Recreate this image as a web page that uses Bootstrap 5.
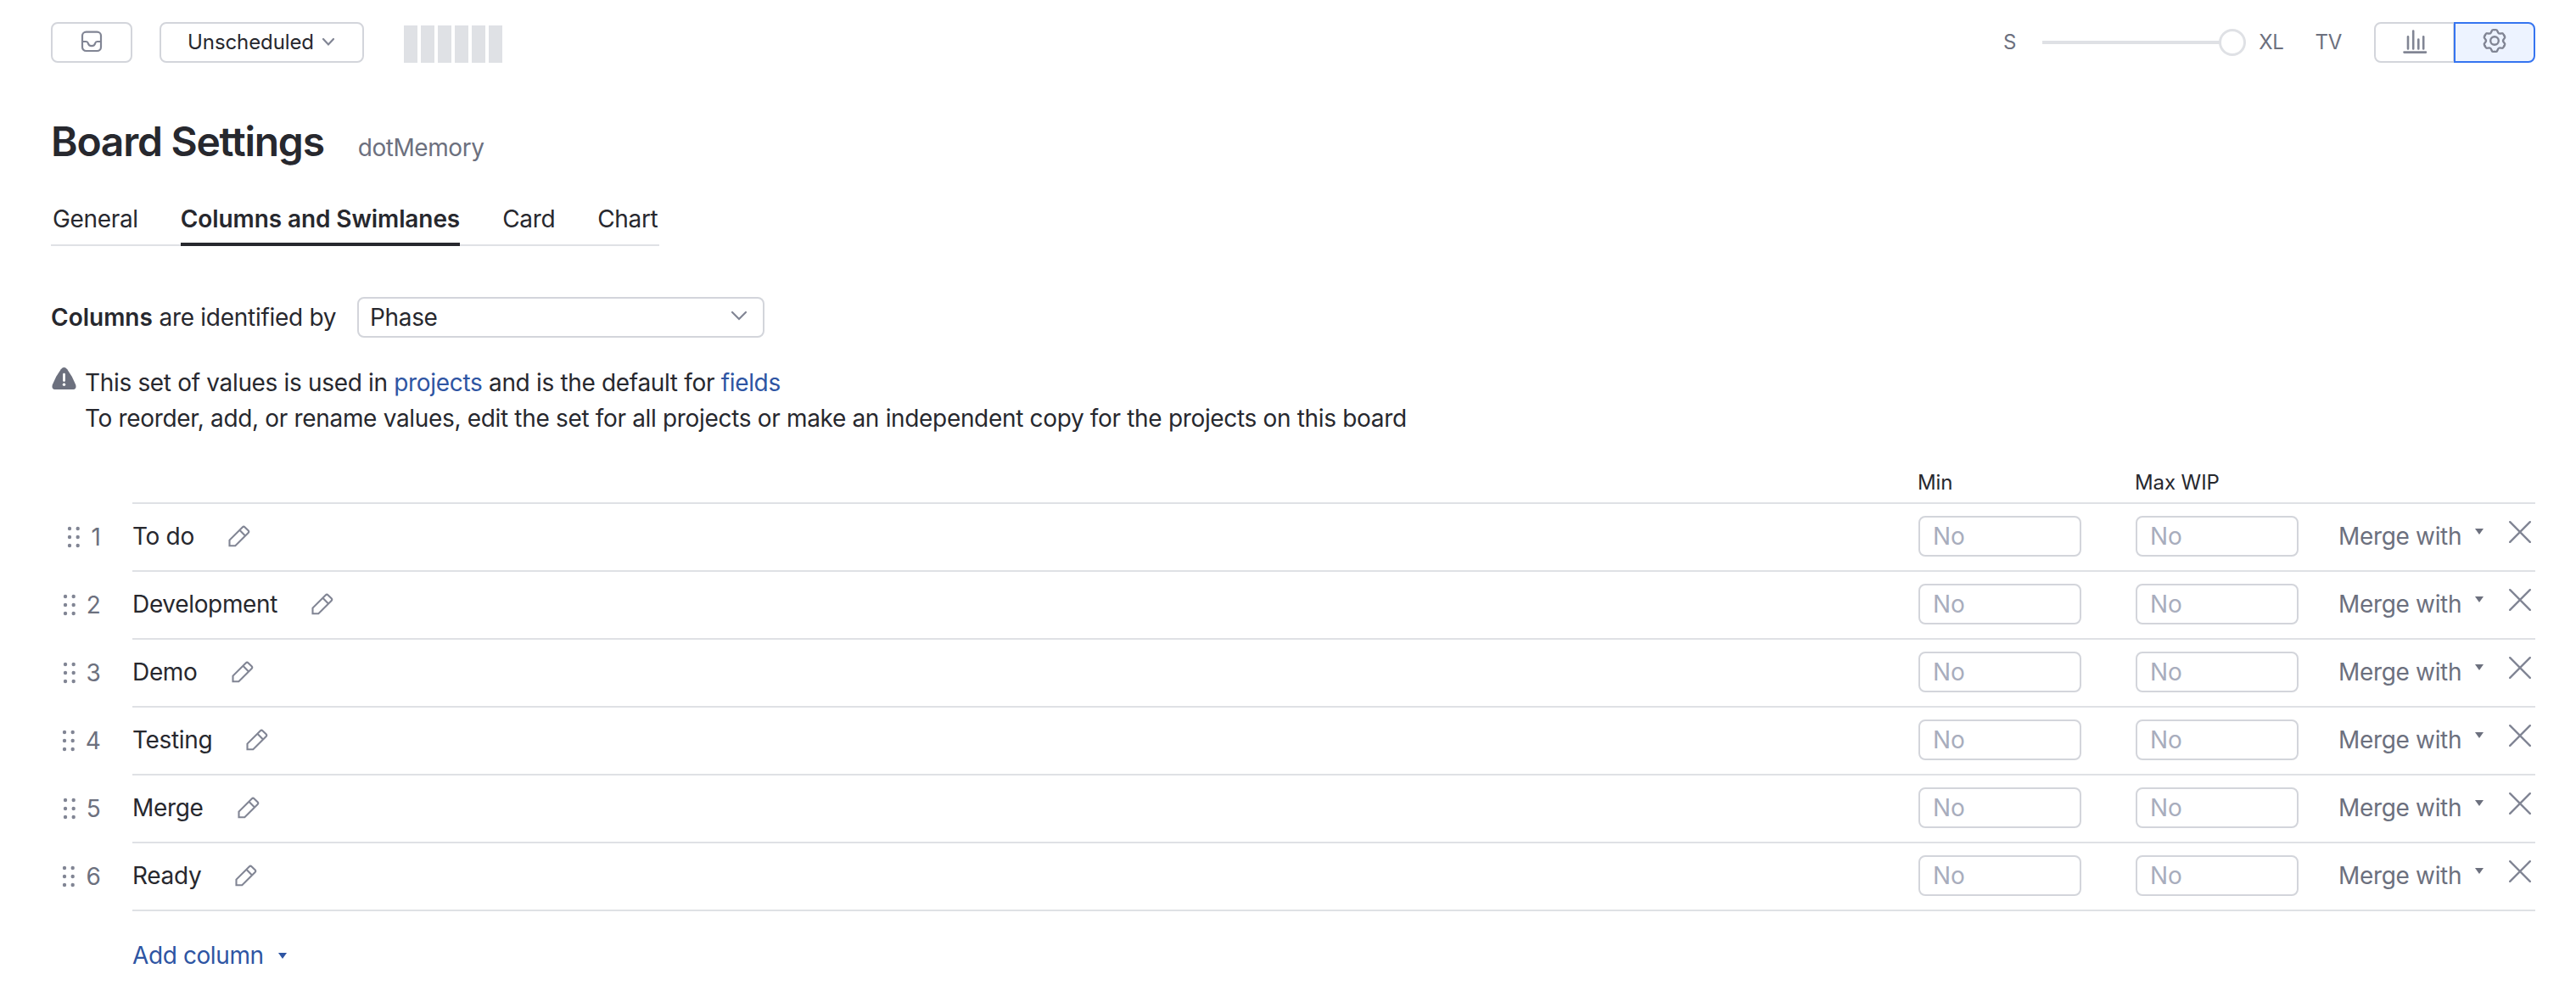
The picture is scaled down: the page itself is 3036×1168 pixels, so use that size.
<!DOCTYPE html>
<html lang="en">
<head>
<meta charset="utf-8">
<meta name="viewport" content="width=device-width, initial-scale=1">
<title>Board Settings</title>
<link rel="stylesheet" href="https://cdn.jsdelivr.net/npm/bootstrap@5.3.0/dist/css/bootstrap.min.css">
<style>
:root{--ink:#27282e;--muted:#6c707e;--icon:#818594;--edge:#d3d5db;--rule:#dfe1e5;--anchor:#2e55a3}
body{font-family:Inter,"Liberation Sans",sans-serif;font-size:28px;line-height:40px;letter-spacing:-.33px;color:var(--ink);background:#fff;overflow:hidden}
svg{display:block;fill:none;flex:none}
a{color:var(--anchor);text-decoration:none}
b{font-weight:600;letter-spacing:0}
.page{padding:26px 48px 0 60px;white-space:nowrap}
.tool{height:48px;border:2px solid var(--edge);border-radius:8px;padding:0;font-size:24px;line-height:44px;letter-spacing:-.1px;color:var(--ink);display:flex;align-items:center;justify-content:center}
.tool.active{background:#edf3ff!important;border-color:#3574f0!important}
.w-inbox{width:96px}
.w-sched{width:241px;margin-left:32px}
.w-seg{width:96px}
.btn-group .w-seg:first-child{width:95px}
.minimap{gap:4px;margin-left:47px;padding-top:4px}
.minimap i{width:16px;height:44px;background:var(--rule)}
.sizes{height:48px;font-size:24px;letter-spacing:-.3px;color:var(--muted);margin-right:38px}
.track{width:240px;height:32px;margin:0 15px 0 31px;background:linear-gradient(var(--rule),var(--rule)) 0 14px/210px 4px no-repeat}
.knob{width:32px;height:32px;border:3px solid var(--rule);border-radius:50%;background:#fff}
.tv{margin-left:37px}
.title-row{margin-top:65px;gap:40px}
.title-row h1{font-size:48px;line-height:56px;font-weight:600;letter-spacing:-1.25px;margin:0}
.board-name{color:var(--muted);letter-spacing:-.45px}
.tabs{border-bottom:2px solid var(--rule);width:717px;height:56px;margin-top:39px;padding-left:2px;gap:50px;flex-wrap:nowrap}
.tabs .nav-link{flex:none;padding:0;height:56px;line-height:48px;color:var(--ink);border-bottom:4px solid transparent}
.tabs .nav-link.active{font-weight:600;letter-spacing:-.1px;border-color:var(--ink)}
.identify{margin-top:60px;line-height:48px}
.identify-label{width:361px;letter-spacing:-.28px}
.picker{width:480px;height:48px;border:2px solid var(--edge);border-radius:8px;padding:0 18px 0 13px;line-height:44px}
.notice{margin-top:32px;line-height:42px;gap:10px;padding-left:1px}
.notice svg{margin-top:2px}
.head-row{margin:30px 0 0 96px;height:50px;border-bottom:2px solid var(--rule);font-size:24px;line-height:50px;letter-spacing:-.1px}
.head-min{width:256px}
.head-max{width:472px}
.entry{height:80px}
.grip{width:96px;padding:0 37.500px 2px 0;gap:12px;color:var(--muted)}
.entry-body{border-bottom:2px solid var(--rule);padding:0 5px 2px 0;letter-spacing:-.33px}
.entry-body .pen{margin-left:40px}
.limit{width:192px;height:48px;border:2px solid var(--edge);border-radius:8px;font-size:28px;line-height:40px;letter-spacing:-.2px;padding:2px 15px}
.limit::placeholder{color:#a8adbd;opacity:1}
.limit.min-wip{margin-right:64px}
.limit.max-wip{margin-right:47px}
.merge{width:161px;color:var(--muted)}
.raised{margin-bottom:11px}
.caret-muted{color:var(--muted)}
.cross{margin-left:30px}
.add{margin:32px 0 0 96px;gap:17px;letter-spacing:-.4px}
</style>
</head>
<body>
<svg width="0" height="0" class="position-absolute" aria-hidden="true">
<symbol id="dots" viewBox="0 0 16 26"><g fill="#818594"><circle cx="3" cy="3" r="2.2"/><circle cx="12.700" cy="3" r="2.2"/><circle cx="3" cy="13" r="2.2"/><circle cx="12.700" cy="13" r="2.2"/><circle cx="3" cy="23" r="2.2"/><circle cx="12.700" cy="23" r="2.2"/></g></symbol>
<symbol id="pen" viewBox="0 0 26 26"><path d="M1.500 24.200V17.600L16.700 2.400Q18.200.9 19.700 2.400L23.600 6.300Q24.900 7.700 23.600 9L8.300 24.200ZM13.400 5.800l6.600 6.600" stroke="#818594" stroke-width="2.100"/></symbol>
<symbol id="cross" viewBox="0 0 26 26"><path d="M1.200 1.200 24.800 24.800M24.800 1.200 1.200 24.800" stroke="#818594" stroke-width="2.400" stroke-linecap="round"/></symbol>
<symbol id="caret" viewBox="0 0 10 7"><path d="M0 0H10L5 7Z" fill="currentColor"/></symbol>
<symbol id="gear" viewBox="-15 -15 30 30"><g stroke="#818594" stroke-width="2.400" stroke-linecap="round"><circle r="4.800"/><path id="lobe" d="M0-12.900H1.500Q2.800-12.900 3.200-11.800L3.900-10.200Q4.650-8.050 6.880-8.470L8.620-8.670Q9.770-8.870 10.400-7.750L11.170-6.450"/><use href="#lobe" transform="rotate(60)"/><use href="#lobe" transform="rotate(120)"/><use href="#lobe" transform="rotate(180)"/><use href="#lobe" transform="rotate(240)"/><use href="#lobe" transform="rotate(300)"/></g></symbol>
</svg>
<main class="page">
  <header class="d-flex align-items-start">
    <button class="btn tool w-inbox" aria-label="Backlog"><svg width="26" height="28" viewBox="0 0 26 28" stroke="#818594" stroke-width="2.200"><rect x="2" y="1.600" width="22" height="22.400" rx="4.500"/><path d="M2 13H6.500Q8.300 13 8.700 14.800 9.500 18.200 13 18.200 16.500 18.200 17.300 14.800 17.700 13 19.500 13H24"/></svg></button>
    <button class="btn tool w-sched"><span>Unscheduled</span><svg class="ms-2" width="18" height="12" viewBox="0 0 18 12"><path d="m3 2 6 6.500L15 2" stroke="#818594" stroke-width="2.200" stroke-linecap="round"/></svg></button>
    <div class="d-flex minimap"><i></i><i></i><i></i><i></i><i></i><i></i></div>
    <div class="sizes d-flex align-items-center ms-auto"><span>S</span><div class="track d-flex justify-content-end"><span class="knob"></span></div><span>XL</span><span class="tv">TV</span></div>
    <div class="btn-group">
      <button class="btn tool w-seg" aria-label="Chart"><svg width="30" height="30" viewBox="0 0 30 30" stroke="#818594" stroke-width="2.600" stroke-linecap="round"><path d="M7 8.200V22.500M13.200 1.500V22.500M19.300 11.500V22.500M25.200 8.200V22.500M2.500 26.600H28"/></svg></button>
      <button class="btn tool w-seg active" aria-label="Settings"><svg width="30" height="30" class="mb-1"><use href="#gear"/></svg></button>
    </div>
  </header>

  <div class="title-row d-flex align-items-baseline"><h1>Board Settings</h1><span class="board-name">dotMemory</span></div>

  <nav class="nav tabs"><a class="nav-link">General</a><a class="nav-link active">Columns and Swimlanes</a><a class="nav-link">Card</a><a class="nav-link">Chart</a></nav>

  <section class="identify d-flex">
    <div class="identify-label"><b>Columns</b> are identified by</div>
    <div class="picker d-flex align-items-center justify-content-between"><span>Phase</span><svg class="mb-1" width="20" height="12" viewBox="0 0 20 12"><path d="m2 2 8 8 8-8" stroke="#818594" stroke-width="2.200" stroke-linecap="round"/></svg></div>
  </section>

  <section class="notice d-flex align-items-start">
    <svg width="29" height="28" viewBox="0 0 29 28"><path d="M10.800 3.200Q14.500-1.200 18.200 3.200 24.800 12 28.200 21.500 29.500 26.500 25.500 27H3.500Q-.5 26.500.8 21.500 4.200 12 10.800 3.200Z" fill="#6c707e"/><path d="M14.500 9.200V16.500" stroke="#fff" stroke-width="2.800" stroke-linecap="round"/><circle cx="14.500" cy="21.300" r="1.700" fill="#fff"/></svg>
    <div>This set of values is used in <a href="#">projects</a> and is the default for <a href="#">fields</a><br>To reorder, add, or rename values, edit the set for all projects or make an independent copy for the projects on this board</div>
  </section>

  <section>
    <div class="head-row d-flex justify-content-end"><span class="head-min">Min</span><span class="head-max">Max WIP</span></div>

    <div class="entry d-flex">
      <div class="grip d-flex align-items-center justify-content-end"><svg width="16" height="26"><use href="#dots"/></svg><span>1</span></div>
      <div class="entry-body d-flex align-items-center flex-grow-1"><span>To do</span><svg class="pen" width="26" height="26"><use href="#pen"/></svg><input class="form-control limit min-wip ms-auto" placeholder="No"><input class="form-control limit max-wip" placeholder="No"><span class="merge">Merge with</span><svg class="raised caret-muted" width="10" height="7"><use href="#caret"/></svg><svg class="cross raised" width="26" height="26"><use href="#cross"/></svg></div>
    </div>
    <div class="entry d-flex">
      <div class="grip d-flex align-items-center justify-content-end"><svg width="16" height="26"><use href="#dots"/></svg><span>2</span></div>
      <div class="entry-body d-flex align-items-center flex-grow-1"><span>Development</span><svg class="pen" width="26" height="26"><use href="#pen"/></svg><input class="form-control limit min-wip ms-auto" placeholder="No"><input class="form-control limit max-wip" placeholder="No"><span class="merge">Merge with</span><svg class="raised caret-muted" width="10" height="7"><use href="#caret"/></svg><svg class="cross raised" width="26" height="26"><use href="#cross"/></svg></div>
    </div>
    <div class="entry d-flex">
      <div class="grip d-flex align-items-center justify-content-end"><svg width="16" height="26"><use href="#dots"/></svg><span>3</span></div>
      <div class="entry-body d-flex align-items-center flex-grow-1"><span>Demo</span><svg class="pen" width="26" height="26"><use href="#pen"/></svg><input class="form-control limit min-wip ms-auto" placeholder="No"><input class="form-control limit max-wip" placeholder="No"><span class="merge">Merge with</span><svg class="raised caret-muted" width="10" height="7"><use href="#caret"/></svg><svg class="cross raised" width="26" height="26"><use href="#cross"/></svg></div>
    </div>
    <div class="entry d-flex">
      <div class="grip d-flex align-items-center justify-content-end"><svg width="16" height="26"><use href="#dots"/></svg><span>4</span></div>
      <div class="entry-body d-flex align-items-center flex-grow-1"><span>Testing</span><svg class="pen" width="26" height="26"><use href="#pen"/></svg><input class="form-control limit min-wip ms-auto" placeholder="No"><input class="form-control limit max-wip" placeholder="No"><span class="merge">Merge with</span><svg class="raised caret-muted" width="10" height="7"><use href="#caret"/></svg><svg class="cross raised" width="26" height="26"><use href="#cross"/></svg></div>
    </div>
    <div class="entry d-flex">
      <div class="grip d-flex align-items-center justify-content-end"><svg width="16" height="26"><use href="#dots"/></svg><span>5</span></div>
      <div class="entry-body d-flex align-items-center flex-grow-1"><span>Merge</span><svg class="pen" width="26" height="26"><use href="#pen"/></svg><input class="form-control limit min-wip ms-auto" placeholder="No"><input class="form-control limit max-wip" placeholder="No"><span class="merge">Merge with</span><svg class="raised caret-muted" width="10" height="7"><use href="#caret"/></svg><svg class="cross raised" width="26" height="26"><use href="#cross"/></svg></div>
    </div>
    <div class="entry d-flex">
      <div class="grip d-flex align-items-center justify-content-end"><svg width="16" height="26"><use href="#dots"/></svg><span>6</span></div>
      <div class="entry-body d-flex align-items-center flex-grow-1"><span>Ready</span><svg class="pen" width="26" height="26"><use href="#pen"/></svg><input class="form-control limit min-wip ms-auto" placeholder="No"><input class="form-control limit max-wip" placeholder="No"><span class="merge">Merge with</span><svg class="raised caret-muted" width="10" height="7"><use href="#caret"/></svg><svg class="cross raised" width="26" height="26"><use href="#cross"/></svg></div>
    </div>
  </section>

  <a href="#" class="add d-flex align-items-center">Add column<svg width="10" height="7"><use href="#caret"/></svg></a>
</main>
<script src="https://cdn.jsdelivr.net/npm/bootstrap@5.3.0/dist/js/bootstrap.bundle.min.js"></script>
</body>
</html>
